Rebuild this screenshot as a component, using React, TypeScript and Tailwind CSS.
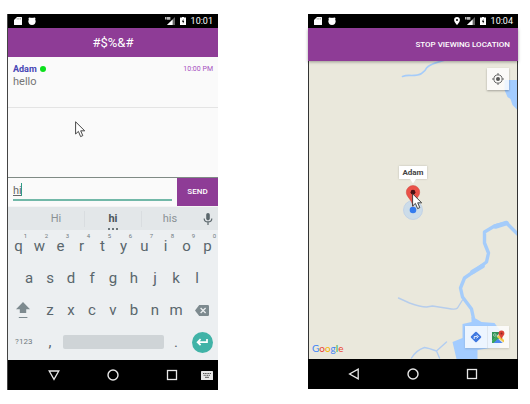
import type { ReactNode } from "react";

const topRow = ["q", "w", "e", "r", "t", "y", "u", "i", "o", "p"];
const middleRow = ["a", "s", "d", "f", "g", "h", "j", "k", "l"];
const bottomRow = ["z", "x", "c", "v", "b", "n", "m"];

function SdCardIcon() {
  return (
    <svg viewBox="0 0 8 8" className="h-2 w-2" aria-hidden="true">
      <path d="M3 0H7.5Q8 0 8 .6V7.4Q8 8 7.4 8H.6Q0 8 0 7.4V3Z" fill="#fff" />
      <path d="M3.2 1V2.6M4.8 1V2.6M6.4 1V2.6" stroke="#777" strokeWidth=".6" />
    </svg>
  );
}

function BugIcon() {
  return (
    <svg viewBox="0 0 8 8" className="h-2 w-2" aria-hidden="true">
      <circle cx="4" cy="4.3" r="3.6" fill="#fff" />
      <circle cx="1.8" cy="1.6" r="1.2" fill="#fff" />
      <circle cx="6.2" cy="1.6" r="1.2" fill="#fff" />
    </svg>
  );
}

function PinIcon() {
  return (
    <svg viewBox="0 0 6 8" className="h-2 w-1.5" aria-hidden="true">
      <path d="M3 0A2.9 2.9 0 0 1 5.9 2.9C5.9 5 3 8 3 8S.1 5 .1 2.9A2.9 2.9 0 0 1 3 0Z" fill="#fff" />
      <circle cx="3" cy="2.9" r="1" fill="#000" />
    </svg>
  );
}

function SignalIcon() {
  return (
    <svg viewBox="0 0 10 8" className="h-2 w-2.5" aria-hidden="true">
      <path d="M0 0H1.6V2.4H0ZM2 0H5.4V2.8H2Z" fill="#bbb" />
      <path d="M10 0V8H2Z" fill="#666" />
      <path d="M7.6 2.4V8H2Z" fill="#fff" />
    </svg>
  );
}

function BatteryIcon() {
  return (
    <svg viewBox="0 0 6 8" className="h-2 w-1.5" aria-hidden="true">
      <path d="M2 0H4V.6H6V8H0V.6H2Z" fill="#fff" />
      <path d="M3.4 2L1.9 4.7H2.9V6.7L4.2 4H3.4Z" fill="#000" />
    </svg>
  );
}

function StatusBar({ time, located = false }: { time: string; located?: boolean }) {
  return (
    <div className="flex h-[14px] items-center justify-between bg-black pr-[5px] pl-[6px]">
      <div className="flex gap-[6px]">
        <SdCardIcon />
        <BugIcon />
      </div>
      <div className="flex items-center gap-[5px]">
        {located && <PinIcon />}
        <SignalIcon />
        <BatteryIcon />
        <span className="text-[9px] leading-3 text-white">{time}</span>
      </div>
    </div>
  );
}

function NavBar({ back, extra }: { back: ReactNode; extra?: ReactNode }) {
  return (
    <nav className="flex h-[30px] items-center bg-black pl-[17px]">
      <button type="button" aria-label="Back" className="flex flex-1 justify-center">
        {back}
      </button>
      <button type="button" aria-label="Home" className="flex flex-1 justify-center">
        <svg viewBox="0 0 12 12" className="h-3 w-3">
          <circle cx="6" cy="6" r="5" fill="none" stroke="#e8e8e8" strokeWidth="1.4" />
        </svg>
      </button>
      <button type="button" aria-label="Recent apps" className="flex flex-1 justify-center">
        <svg viewBox="0 0 12 12" className="h-3 w-3">
          <rect x="1.5" y="1.5" width="9" height="9" fill="none" stroke="#e8e8e8" strokeWidth="1.3" />
        </svg>
      </button>
      <div className="w-[17px]">{extra}</div>
    </nav>
  );
}

function Pointer() {
  return (
    <svg viewBox="0 0 11 17" className="h-[17px] w-[11px]" aria-hidden="true">
      <path d="M.6 .8V13L3.4 10.4L5.6 15.6L7.8 14.6L5.7 9.8H9.7Z" fill="#fff" stroke="#333" strokeWidth=".9" />
    </svg>
  );
}

function Key({ label, hint }: { label: string; hint?: string }) {
  return (
    <button type="button" className="relative col-span-2 flex items-center justify-center text-[15px] leading-5 text-[#59666c]">
      {label}
      {hint && <span className="absolute top-[2px] right-[2px] text-[6px] leading-2 text-[#6f7a7f]">{hint}</span>}
    </button>
  );
}

function Keyboard() {
  return (
    <div className="bg-[#eceff1] pb-[2px]">
      <div className="flex h-[23px] items-center bg-[#e3e7e9] pl-5 text-[11px] leading-4 text-[#8a9195]">
        <button type="button" className="flex-1">Hi</button>
        <button type="button" className="relative flex-1 border-x border-[#d9dde0] font-bold text-[#4b565b]">
          hi
          <svg viewBox="0 0 10 2" className="absolute -bottom-[3px] left-1/2 h-[2px] w-[10px] -translate-x-1/2">
            <path d="M0 0H2V2H0ZM4 0H6V2H4ZM8 0H10V2H8Z" fill="#6b7579" />
          </svg>
        </button>
        <button type="button" className="flex-1">his</button>
        <button type="button" aria-label="Voice input" className="flex w-5 justify-center">
          <svg viewBox="0 0 10 12" className="h-3 w-[10px]">
            <rect x="3.2" y="0" width="3.6" height="7.4" rx="1.8" fill="#5b676c" />
            <path d="M1.2 5.4Q1.2 8.9 5 8.9Q8.8 8.9 8.8 5.4M5 9V12" fill="none" stroke="#5b676c" strokeWidth="1.2" />
          </svg>
        </button>
      </div>
      <div className="grid auto-rows-[32px] grid-cols-20">
        {topRow.map((k, i) => (
          <Key key={k} label={k} hint={String((i + 1) % 10)} />
        ))}
        <span />
        {middleRow.map((k) => (
          <Key key={k} label={k} />
        ))}
        <span />
        <button type="button" aria-label="Shift" className="col-span-3 flex items-center pl-2">
          <svg viewBox="0 0 14 18" className="h-[18px] w-[14px]">
            <path d="M7 1L14 8.2H10.2V12H3.8V8.2H0Z" fill="#7d8a8f" />
            <path d="M2.8 16.5H11.4" stroke="#7d8a8f" />
          </svg>
        </button>
        {bottomRow.map((k) => (
          <Key key={k} label={k} />
        ))}
        <button type="button" aria-label="Delete" className="col-span-3 flex items-center justify-center">
          <svg viewBox="0 0 14 11" className="h-[11px] w-[14px]">
            <path d="M4.2 0H12.8Q14 0 14 1.2V9.8Q14 11 12.8 11H4.2L0 5.5Z" fill="#7d8a8f" />
            <path d="M5.6 3L10.6 8M10.6 3L5.6 8" stroke="#eceff1" strokeWidth="1.3" />
          </svg>
        </button>
        <button type="button" className="col-span-3 text-[8px] leading-4 text-[#6f7a7f]">?123</button>
        <Key label="," />
        <div className="col-span-10 flex items-center px-[2px]">
          <button type="button" aria-label="Space" className="h-[14px] w-full rounded-[2px] bg-[#cfd4d7]" />
        </div>
        <Key label="." />
        <div className="col-span-3 flex items-center justify-center">
          <button type="button" aria-label="Enter" className="flex h-[21px] w-[21px] items-center justify-center rounded-full bg-[#41b3a7]">
            <svg viewBox="0 0 12 8" className="h-2 w-3">
              <path d="M11 1V4.2H2M4.6 1.2L1.6 4.2L4.6 7.2" fill="none" stroke="#fff" strokeWidth="1.7" />
            </svg>
          </button>
        </div>
      </div>
    </div>
  );
}

function ChatPhone() {
  return (
    <section className="min-w-0 flex-1 border-l border-[#444] bg-[#fafafa]">
      <StatusBar time="10:01" />
      <header className="flex h-[29px] items-center justify-center bg-[#8e3c96]">
        <h1 className="text-[13px] leading-4 text-white">#$%&amp;#</h1>
      </header>
      <div className="relative h-[121px] border-b border-[#7f8a84]">
        <article className="h-[51px] border-b border-[#e4e4e4] px-[5px] pt-[6px]">
          <div className="flex items-center gap-[3px]">
            <span className="text-[9px] leading-3 font-bold text-[#4646b4]">Adam</span>
            <span className="h-[6px] w-[6px] rounded-full bg-[#0be01c]" />
            <time className="ml-auto text-[7px] leading-3 text-[#a64fc0]">10:00 PM</time>
          </div>
          <p className="text-[11px] leading-[14px] text-[#757575]">hello</p>
        </article>
        <div className="absolute top-[64px] left-[67px]">
          <Pointer />
        </div>
      </div>
      <form className="flex h-[29px] border-b border-[#f4f4f4]" onSubmit={(e) => e.preventDefault()}>
        <div className="relative mx-[5px] mb-[5px] flex min-w-0 flex-1 items-center border-b-2 border-[#72b8a8] pt-[4px]">
          <input
            aria-label="Message"
            defaultValue="hi"
            className="w-full min-w-0 bg-transparent text-[11px] leading-4 text-[#666] underline outline-none"
          />
          <span className="absolute top-[5px] left-[8px] h-[13px] w-px bg-[#2f9c86]" />
        </div>
        <button type="submit" className="w-[41px] bg-[#8e3c96] text-[8px] leading-4 font-medium text-white">
          SEND
        </button>
      </form>
      <Keyboard />
      <NavBar
        back={
          <svg viewBox="0 0 12 12" className="h-3 w-3">
            <path d="M1.2 2H10.8L6 10.4Z" fill="none" stroke="#e8e8e8" strokeWidth="1.3" />
          </svg>
        }
        extra={
          <button type="button" aria-label="Switch keyboard" className="block">
            <svg viewBox="0 0 12 9" className="h-[9px] w-3">
              <rect width="12" height="9" rx=".6" fill="#e8e8e8" />
              <path d="M2 2.5H10M2.6 4.3H9.4" stroke="#555" strokeDasharray="1.2 .5" />
              <path d="M4 6.3H8" stroke="#555" />
            </svg>
          </button>
        }
      />
    </section>
  );
}

function MapTerrain() {
  return (
    <svg viewBox="0 0 209 298" preserveAspectRatio="xMidYMid slice" className="absolute inset-0 h-full w-full" aria-hidden="true">
      <g fill="none" stroke="#a5ccfa" strokeLinecap="round" strokeLinejoin="round">
        <path d="M94 15.5Q98 14 103 14.5Q110 14.5 113 12.5Q117 10 118 7Q121 3 137-1" strokeWidth="1.6" />
        <path d="M209 173L198 162L186 165L176 171L176 182L180 192L178 201L166 210L156 217L152 227L154 236L163 248L166 262" strokeWidth="3.4" />
        <path d="M198 162L187 165.5M174 205L164 211" strokeWidth="4.6" />
        <path d="M90 237L101 242Q112 246 118 246L124 245L140 247.5Q147 249 149 247L154 239" stroke="#b6cdec" strokeWidth="1.4" />
        <path d="M103 297Q108 289 116 286.5Q120 287 128 290L138 281M128 290L131 297" stroke="#b1cdf2" strokeWidth="1.4" />
      </g>
      <g fill="#a3ccff">
        <path d="M196 19H209V49L204 44L202 38L199 36L196 29Z" />
        <path d="M163 256L168 258L173 261L186 262L192 270L191 287H182L169 289V298H148L144 281L154 277L154 263L163 261Z" />
      </g>
    </svg>
  );
}

function MapPhone() {
  return (
    <section className="min-w-0 flex-1">
      <StatusBar time="10:04" located />
      <header className="relative z-10 flex h-[33px] items-center justify-end bg-[#8e3c96] pr-2 shadow-[0_1px_3px_rgba(0,0,0,0.35)]">
        <button type="button" className="text-[8px] leading-4 font-medium text-white">
          STOP VIEWING LOCATION
        </button>
      </header>
      <div className="relative h-[298px] overflow-hidden border-x border-[#333] bg-[#eae8dc]">
        <MapTerrain />
        <button
          type="button"
          aria-label="My location"
          className="absolute top-[7px] right-2 flex h-[22px] w-[22px] items-center justify-center bg-white/80 shadow-[0_1px_2px_rgba(0,0,0,0.3)]"
        >
          <svg viewBox="0 0 12 12" className="h-3 w-3">
            <circle cx="6" cy="6" r="4.1" fill="none" stroke="#666" />
            <circle cx="6" cy="6" r="2" fill="#555" />
            <path d="M6 0V2M6 10V12M0 6H2M10 6H12" stroke="#666" />
          </svg>
        </button>
        <div className="absolute top-[105px] left-1/2 flex w-[28px] -translate-x-1/2 flex-col items-center">
          <span className="w-full bg-white text-center text-[8px] leading-[13px] font-bold text-[#444] shadow-[0_0_2px_rgba(0,0,0,0.2)]">Adam</span>
          <svg viewBox="0 0 22 42" className="h-[42px] w-[22px]" aria-hidden="true">
            <circle cx="11" cy="31" r="9.5" fill="#bcd5f0" fillOpacity=".65" stroke="#b7cce6" strokeWidth=".7" />
            <circle cx="11" cy="31" r="3.3" fill="#347bee" />
            <path d="M8 0H14L11 4.5Z" fill="#fff" />
            <path d="M11 6.5A6.7 6.7 0 0 1 17.7 13.2C17.7 18 12.2 20 11 27.5C9.8 20 4.3 18 4.3 13.2A6.7 6.7 0 0 1 11 6.5Z" fill="#ea5148" stroke="#cf473f" strokeWidth=".5" />
            <circle cx="11" cy="13.2" r="2.4" fill="#4b1013" />
          </svg>
          <div className="absolute top-[27px] left-[13px]">
            <Pointer />
          </div>
        </div>
        <div className="absolute right-2 bottom-[11px] flex h-[22px] w-[44px] bg-white/80 shadow-[0_1px_2px_rgba(0,0,0,0.15)]">
          <button type="button" aria-label="Directions" className="flex flex-1 items-center justify-center border-r border-[#dfe6ee]">
            <svg viewBox="0 0 12 12" className="h-3 w-3">
              <rect x="2" y="2" width="8" height="8" rx="1" fill="#3f78e0" transform="rotate(45 6 6)" />
              <path d="M4.2 8V5.6H7.4M6.5 3.8L8.3 5.6L6.5 7.4" fill="none" stroke="#fff" strokeWidth=".9" />
            </svg>
          </button>
          <button type="button" aria-label="Open in maps" className="flex flex-1 items-center justify-center">
            <svg viewBox="0 0 14 14" className="h-[14px] w-[14px]">
              <path d="M1 2H12V13H1Z" fill="#e4e4e0" />
              <path d="M1 2H9.5L1 11Z" fill="#2f9157" />
              <path d="M1 10.5L5.5 6L8 8.5L3.5 13H1Z" fill="#37a45c" />
              <path d="M2.5 13L7 8.8L11.5 13Z" fill="#4a86ee" />
              <path d="M6 7L8 5L13 10V12.5Z" fill="#f6c945" />
              <path d="M10.5 .5A2.9 2.9 0 0 1 13.4 3.4C13.4 5.5 10.9 6.5 10.5 9.5C10.1 6.5 7.6 5.5 7.6 3.4A2.9 2.9 0 0 1 10.5 .5Z" fill="#dd4339" />
              <circle cx="10.5" cy="3.4" r="1" fill="#8d2924" />
              <circle cx="3.8" cy="5" r="1.3" fill="none" stroke="#d7eedd" strokeWidth=".6" />
            </svg>
          </button>
        </div>
        <span className="absolute bottom-[3px] left-[3px] font-['Lato',sans-serif] text-[10px] leading-4">
          <span className="text-[#4285f4]">G</span>
          <span className="text-[#ea4335]">o</span>
          <span className="text-[#f4b400]">o</span>
          <span className="text-[#4285f4]">g</span>
          <span className="text-[#34a853]">l</span>
          <span className="text-[#ea4335]">e</span>
        </span>
      </div>
      <NavBar
        back={
          <svg viewBox="0 0 12 12" className="h-3 w-3">
            <path d="M10.2 1.2V10.8L1.6 6Z" fill="none" stroke="#e8e8e8" strokeWidth="1.3" />
          </svg>
        }
      />
    </section>
  );
}

export default function App() {
  return (
    <main className="flex min-h-screen items-start gap-[90px] bg-white pt-[14px] pr-3 pl-[7px] font-['Roboto',sans-serif]">
      <ChatPhone />
      <MapPhone />
    </main>
  );
}
